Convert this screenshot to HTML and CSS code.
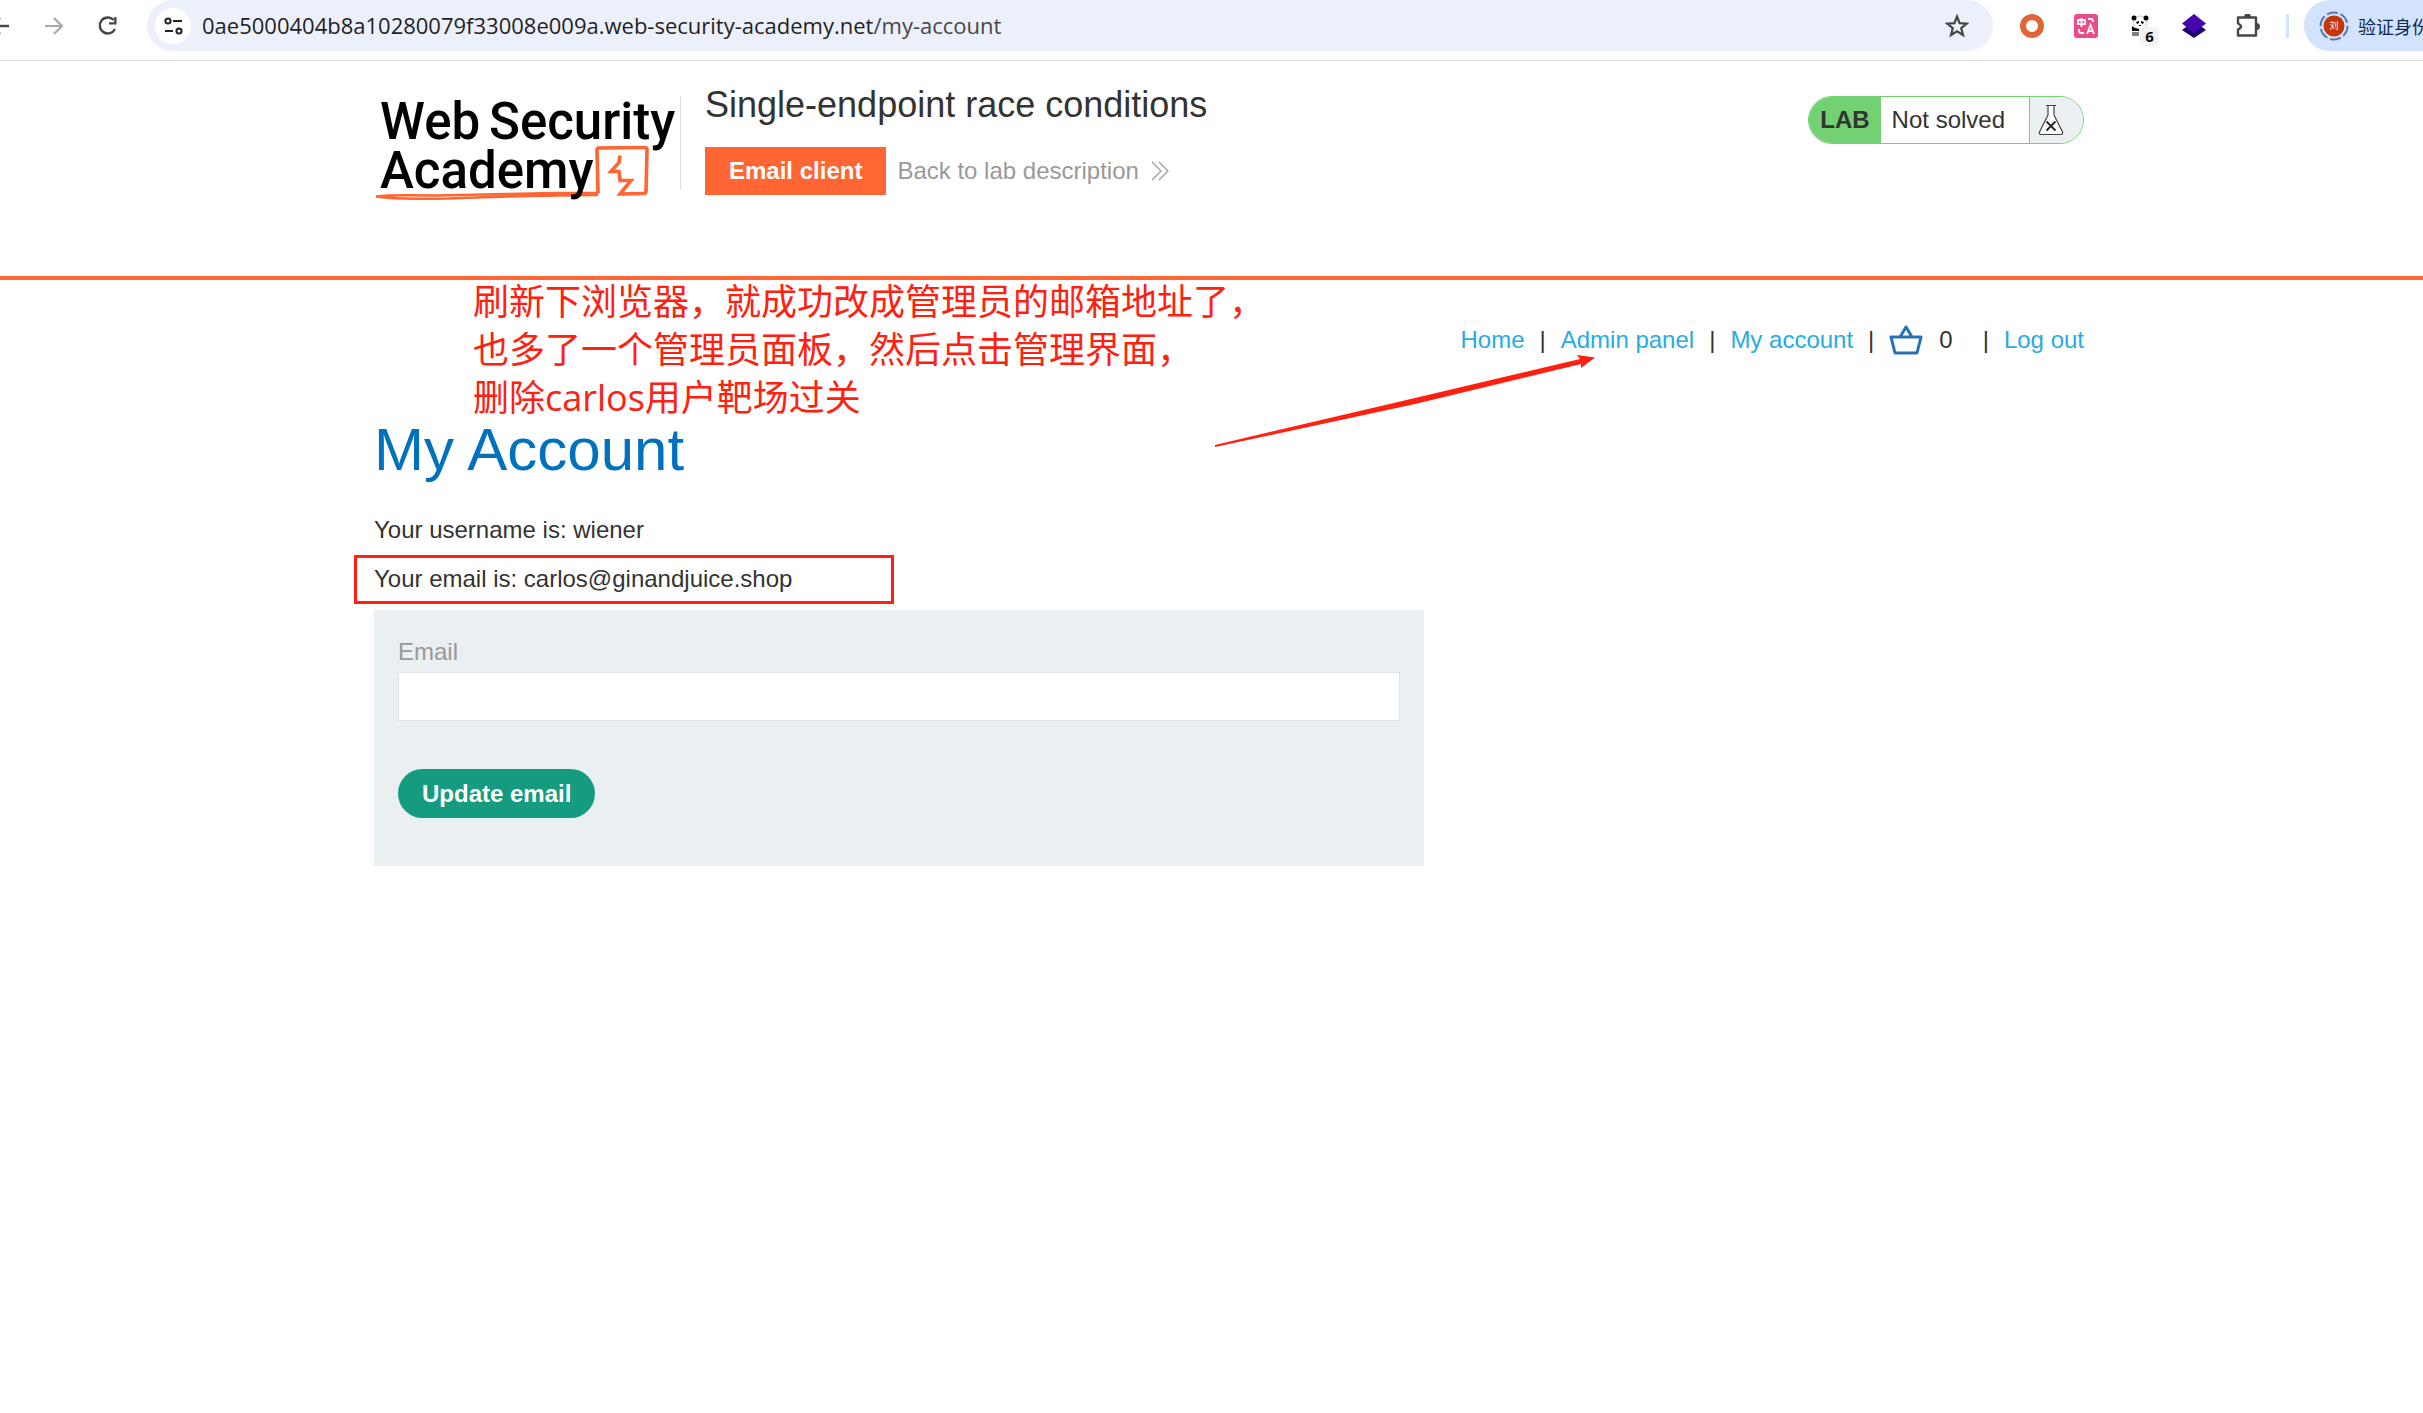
FILE: index.html
```html
<!DOCTYPE html>
<html lang="en">
<head>
    <meta charset="UTF-8">
    <meta name="viewport" content="width=device-width, initial-scale=1.0">
    <title>Single-endpoint race conditions</title>
    <link rel="stylesheet" href="styles.css">
</head>
<body>

    <div class="toolbar">
        <div class="nav-buttons">
            <button class="icon-button" aria-label="Back">
                <svg width="24" height="24" viewBox="0 0 24 24"><path d="M21 12H4M12 4l-8 8 8 8" fill="none" stroke="#474747" stroke-width="2.4"/></svg>
            </button>
            <button class="icon-button" aria-label="Forward" disabled>
                <svg width="24" height="24" viewBox="0 0 24 24"><path d="M3 12h17M12 4l8 8-8 8" fill="none" stroke="#a9a9a9" stroke-width="2.2"/></svg>
            </button>
            <button class="icon-button" aria-label="Reload">
                <svg width="24" height="24" viewBox="0 0 24 24"><path d="M19 15a8 8 0 1 1-1.300-9" fill="none" stroke="#474747" stroke-width="2.400"/><path d="M20.500 3v7.500H13V8.200h5.200V3z" fill="#474747"/></svg>
            </button>
        </div>
        <div class="address-bar">
            <button class="site-info" aria-label="Site information">
                <svg width="20" height="18" viewBox="0 0 20 18" fill="none" stroke="#222" stroke-width="2"><circle cx="5" cy="4" r="2.600"/><path d="M10 4h9M2 14h8"/><circle cx="16" cy="14" r="2.600"/></svg>
            </button>
            <div class="url">0ae5000404b8a10280079f33008e009a.web-security-academy.net<span class="path">/my-account</span></div>
            <button class="icon-button" aria-label="Bookmark">
                <svg width="24" height="24" viewBox="0 0 24 24"><path d="M12 2.500l2.600 6.600 7.100.5-5.500 4.500 1.800 6.900-6-3.800-6 3.800 1.800-6.900-5.500-4.500 7.100-.5z" fill="none" stroke="#474747" stroke-width="2.200"/></svg>
            </button>
        </div>
        <div class="extensions">
            <svg width="24" height="24" viewBox="0 0 24 24"><circle cx="12" cy="12" r="9" fill="none" stroke="#e06733" stroke-width="6"/></svg>
            <svg width="24" height="24" viewBox="0 0 24 24"><rect width="24" height="24" rx="3" fill="#ea4c89"/><path d="M4 6h7v4H4zM7.500 4v9M14 5h3q2 0 2 3M5 15v1q0 3 2 3h3M13 20l3.500-9 3.500 9M14 17h5" fill="none" stroke="#fff" stroke-width="1.800"/></svg>
            <div class="panda">
                <svg width="24" height="24" viewBox="0 0 24 24"><path d="M6 4q6-4 12 0 2 6-1 9-5 4-10 0-3-3-1-9z" fill="#fff" stroke="#aaa" stroke-width=".6"/><circle cx="6" cy="4" r="2.500"/><circle cx="18" cy="4" r="2.500"/><path d="M8 8l3-1v2l-2 1zM13 7l3 1-1 2-2-1zM4 12q3 3 7 3v2H4zM4 18.500h7v1H4zM4 20.500h7v1H4zM11 11h2v1h-2z"/></svg>
                <span class="badge">6</span>
            </div>
            <svg width="24" height="24" viewBox="0 0 24 24"><path d="M0 16l4-3h16l4 3-12 8z" fill="#20006e"/><path d="M12 0l12 9.500L12 19 0 9.500z" fill="#4606ae"/></svg>
            <svg width="24" height="24" viewBox="0 0 24 24"><path d="M2 3.500h18v18H2v-6q6-3 0-6z" fill="none" stroke="#474747" stroke-width="2.400" stroke-linejoin="round"/><path d="M8 3a3.500 3.500 0 0 1 7 0zM20.500 9a3.500 3.500 0 0 1 0 7z" fill="#474747"/></svg>
        </div>
        <span class="divider"></span>
        <button class="profile">
            <svg width="30" height="30" viewBox="0 0 30 30"><circle cx="15" cy="15" r="13.500" fill="none" stroke="#557ab0" stroke-width="2" stroke-dasharray="11 3"/><circle cx="15" cy="15" r="10.500" fill="#c5360d"/><text class="avatar-text" x="15" y="18" text-anchor="middle">刘</text></svg>
            <span>验证身份</span>
        </button>
    </div>

    <header class="lab-header">
        <a class="logo" href="#" aria-label="Web Security Academy">
            <svg width="306" height="116" viewBox="0 0 306 116">
                <path d="M2 100.500q14-2 60-1l70-1.500 50-1h42l-1-43q0-2 2-2l46-.5q2 0 2 2l-1 42q0 2-2 2l-23 .5M224 99l-40 .500q-70 1-110 3-50 1-72-2" fill="none" stroke="#ff6633" stroke-width="2.500" stroke-linejoin="round"/>
                <path d="M224 97l-1-43q0-2 2-2l46-.5q2 0 2 2l-1 42q0 2-2 2l-22 .5h-2l11-13.500-11 0-1-9h-8l8-9 1-7" fill="none" stroke="#ff6633" stroke-width="3.600"/>
                <g class="logo-text">
                    <text x="6" y="43">Web</text>
                    <text x="115" y="43">Security</text>
                    <text x="6" y="92">Academy</text>
                </g>
            </svg>
        </a>
        <div class="title-container">
            <h2>Single-endpoint race conditions</h2>
            <div class="title-links">
                <a class="email-client" href="#">Email client</a>
                <a class="back-link" href="#">Back to lab description
                    <svg width="18" height="20" viewBox="0 0 18 20"><path d="M1 1l9 9-9 9M8 1l9 9-9 9" fill="none" stroke="#999" stroke-width="1.200"/></svg>
                </a>
            </div>
        </div>
        <div class="lab-status">
            <span class="lab-tag">LAB</span>
            <p>Not solved</p>
            <span class="lab-icon">
                <svg width="26" height="32" viewBox="0 0 26 32"><path d="M8 1.500h10M10 2v9L1.500 28q-.8 2.500 2 2.500h19q2.800 0 2-2.500L16 11V2" fill="#fff" stroke="#444" stroke-width="1.200"/><path d="M8.500 17.500l9 9M17.500 17.500l-9 9" stroke="#222" stroke-width="1.800"/></svg>
            </span>
        </div>
    </header>

    <main class="account-page">
        <nav class="top-links">
            <a href="#">Home</a><span>|</span>
            <a href="#">Admin panel</a><span>|</span>
            <a href="#">My account</a><span>|</span>
            <div class="cart">
                <svg width="34" height="30" viewBox="0 0 34 30"><path d="M2 12h30l-4 16H6zM11 12l6-10 6 10" fill="none" stroke="#2a70b8" stroke-width="3" stroke-linejoin="round"/></svg>
                0
            </div>
            <span>|</span>
            <a href="#">Log out</a>
        </nav>

        <h1>My Account</h1>
        <p>Your username is: wiener</p>
        <p class="user-email">Your email is: carlos@ginandjuice.shop</p>

        <form class="login-form">
            <label for="email">Email</label>
            <input id="email" type="email" name="email">
            <button class="button" type="submit">Update email</button>
        </form>

        <div class="note">刷新下浏览器，就成功改成管理员的邮箱地址了，<br>也多了一个管理员面板，然后点击管理界面，<br>删除carlos用户靶场过关</div>
        <svg class="arrow" width="380" height="94" viewBox="0 0 380 94"><path d="M0 90l200-47 165-39-3-4 18 2.500-14 10.500v-4L200 49 0 92z" fill="#ff2010"/></svg>
    </main>

</body>
</html>
```
FILE: styles.css
```css
*,
*::before {
    box-sizing: border-box;
}

body {
    margin: 0;
    font-family: "Liberation Sans", "Noto Sans CJK SC", sans-serif;
    font-size: 24px;
    color: #333332;
    background-color: #fff;
}

a {
    color: #29abe2;
    text-decoration: none;
}

button {
    border: none;
    padding: 0;
    font-family: inherit;
    cursor: pointer;
}

svg {
    display: block;
    flex: none;
}

/* Browser bar */
.toolbar {
    display: flex;
    height: 61px;
    padding-bottom: 9px;
    border-bottom: 1px solid #dfdfdf;
    overflow: hidden;
}

.nav-buttons {
    display: flex;
    align-items: center;
    gap: 30px;
    width: 147px;
    margin-left: -12px;
    margin-right: 12px;
}

.icon-button {
    display: flex;
    background: none;
}

.address-bar {
    display: flex;
    flex: 1;
    align-items: center;
    padding: 0 24px 0 8px;
    background-color: #ecf0fa;
    border-radius: 26px;
}

.site-info {
    display: flex;
    justify-content: center;
    align-items: center;
    width: 36px;
    height: 36px;
    background-color: #fff;
    border-radius: 50%;
}

.url {
    flex: 1;
    margin-left: 11px;
    padding-bottom: 2px;
    font-family: "Open Sans", sans-serif;
    font-size: 22px;
    color: #1f1f1f;
}

.path {
    color: #474747;
}

.extensions {
    display: flex;
    align-items: center;
    gap: 30px;
    margin-left: 27px;
}

.panda {
    position: relative;
}

.badge {
    position: absolute;
    left: 12px;
    top: 13px;
    width: 19px;
    border-radius: 5px;
    background-color: #f3f3f3;
    font-family: "Open Sans", sans-serif;
    font-size: 15px;
    font-weight: 700;
    line-height: 19px;
    text-align: center;
    color: #111;
}

.divider {
    align-self: center;
    width: 3px;
    height: 24px;
    margin: 0 15px 0 26px;
    background-color: #d3e3fd;
}

.profile {
    display: flex;
    align-items: center;
    gap: 9px;
    width: 119px;
    padding-left: 15px;
    border-radius: 26px 0 0 26px;
    background-color: #d3e3fd;
    font-size: 18px;
    color: #0b2a55;
    white-space: nowrap;
    overflow: hidden;
}

.avatar-text {
    font-size: 9px;
    fill: #fff;
}

/* Lab header */
.lab-header {
    display: flex;
    align-items: flex-start;
    height: 219px;
    padding: 24px 339px 0 374px;
    border-bottom: 4px solid #ff6633;
}

.logo {
    margin-right: 24px;
    border-right: 1px solid #dcdcdc;
    height: 93px;
    margin-top: 11px;
}

.logo svg {
    overflow: visible;
}

.logo-text {
    font-family: Roboto, sans-serif;
    font-size: 51px;
    font-weight: 500;
    fill: #000;
}

.title-container {
    flex: 1;
}

h2 {
    margin: 0 0 22px;
    font-size: 36px;
    font-weight: 400;
    line-height: 40px;
}

.title-links {
    display: flex;
    gap: 11px;
    line-height: 48px;
}

.email-client {
    padding: 0 24px;
    background-color: #ff6633;
    color: #fff;
    font-weight: 700;
}

.back-link {
    display: flex;
    align-items: center;
    gap: 12px;
    color: #999;
}

.lab-status {
    display: flex;
    height: 48px;
    margin-top: 11px;
    border: 1px solid #72d271;
    border-radius: 24px;
    line-height: 46px;
    overflow: hidden;
}

.lab-status p {
    margin: 0;
    padding: 0 24px 0 11px;
}

.lab-tag {
    padding: 0 11px;
    background-color: #72d271;
    font-weight: 700;
}

.lab-icon {
    display: flex;
    align-items: center;
    padding: 0 19px 0 8px;
    border-left: 1px solid #72d271;
    background-color: #eaeff2;
}

/* Account page */
.account-page {
    position: relative;
    padding: 42px 339px 0 374px;
}

.top-links {
    display: flex;
    justify-content: flex-end;
    gap: 15px;
    line-height: 36px;
}

.cart {
    display: flex;
    align-items: center;
    gap: 16px;
    margin-right: 15px;
}

h1 {
    margin: 56px 0 26px;
    font-size: 60px;
    font-weight: 400;
    line-height: 72px;
    color: #0071bd;
}

.account-page p {
    margin: 0 0 13px;
    line-height: 36px;
}

.user-email {
    position: relative;
}

.user-email::before {
    content: "";
    position: absolute;
    left: -20px;
    top: -6px;
    width: 540px;
    height: 49px;
    border: 3px solid #ff2010;
}

.login-form {
    display: flex;
    flex-direction: column;
    align-items: flex-start;
    width: 1050px;
    max-width: 100%;
    padding: 24px 24px 48px;
    background-color: #eaeff2;
}

.login-form label {
    margin-bottom: 2px;
    line-height: 36px;
    color: #999;
}

.login-form input {
    width: 100%;
    height: 49px;
    margin-bottom: 48px;
    padding: 0 12px;
    border: 1px solid #e0e4e8;
    font-size: 24px;
}

.button {
    height: 49px;
    padding: 0 24px;
    border-radius: 25px;
    background-color: #159b80;
    color: #fff;
    font-size: 24px;
    font-weight: 700;
}

/* Red marks over the page */
.note {
    position: absolute;
    left: 473px;
    top: -2px;
    font-family: "Open Sans", "Noto Sans CJK SC", sans-serif;
    font-size: 36px;
    line-height: 48px;
    color: #ff2010;
    white-space: nowrap;
}

.arrow {
    position: absolute;
    left: 1215px;
    top: 75px;
}
```
